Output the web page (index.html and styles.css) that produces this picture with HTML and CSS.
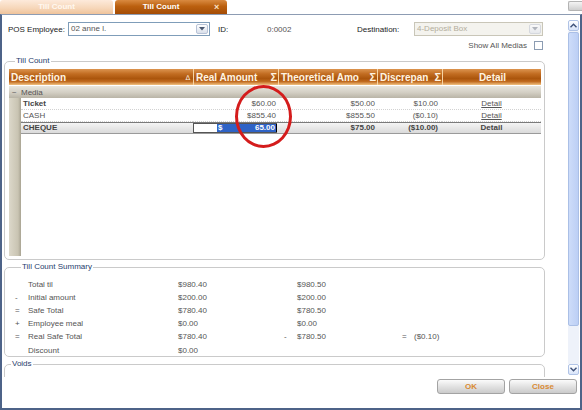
FILE: index.html
```html
<!DOCTYPE html>
<html>
<head>
<meta charset="utf-8">
<title>Till Count</title>
<link rel="stylesheet" href="styles.css">
</head>
<body>
<div class="app">
  <div class="tabs">
    <div class="tab inactive">Till Count</div>
    <div class="tab active"><span class="tab-label">Till Count</span><span class="tab-x">×</span></div>
    <div class="tab-spacer"></div>
    <div class="mini-btn"></div>
  </div>
  <div class="frame">
    <div class="viewport">
      <div class="content">
        <div class="top-row">
          <span class="lbl lbl-emp">POS Employee:</span>
          <div class="select sel-emp">
            <span class="select-text">02 anne l.</span>
            <span class="select-btn"><svg width="6" height="4" viewBox="0 0 6 4"><path d="M0 0H6L3 3.5Z" fill="#4a5870"/></svg></span>
          </div>
          <span class="lbl lbl-id">ID:</span>
          <span class="val-id">0:0002</span>
          <span class="lbl lbl-dest">Destination:</span>
          <div class="select sel-dest disabled">
            <span class="select-text">4-Deposit Box</span>
            <span class="select-btn"><svg width="6" height="4" viewBox="0 0 6 4"><path d="M0 0H6L3 3.5Z" fill="#b0b4bc"/></svg></span>
          </div>
        </div>
        <div class="medias-row">
          <span>Show All Medias</span>
          <span class="checkbox"></span>
        </div>

        <fieldset class="group count">
          <legend>Till Count</legend>
          <div class="grid">
            <div class="grid-head">
              <div class="hcell"><span>Description</span><span class="sort">&#8710;</span></div>
              <div class="hcell"><span>Real Amount</span><span class="sigma">Σ</span></div>
              <div class="hcell"><span>Theoretical Amo</span><span class="sigma">Σ</span></div>
              <div class="hcell"><span>Discrepan</span><span class="sigma">Σ</span></div>
              <div class="hcell center"><span>Detail</span></div>
            </div>
            <div class="group-row"><span class="minus">−</span><span>Media</span></div>
            <div class="grid-body">
              <div class="gutter"></div>
              <div class="rows">
                <div class="row">
                  <div class="cell desc strong">Ticket</div>
                  <div class="cell num">$60.00</div>
                  <div class="cell num">$50.00</div>
                  <div class="cell num disc">$10.00</div>
                  <div class="cell center"><span class="link">Detail</span></div>
                </div>
                <div class="row">
                  <div class="cell desc">CASH</div>
                  <div class="cell num">$855.40</div>
                  <div class="cell num">$855.50</div>
                  <div class="cell num disc">($0.10)</div>
                  <div class="cell center"><span class="link">Detail</span></div>
                </div>
                <div class="row selected">
                  <div class="cell desc">CHEQUE</div>
                  <div class="cell editor-cell">
                    <div class="editor"><span class="editor-sel"><span>$</span><span>65.00</span></span><span class="caret"></span></div>
                  </div>
                  <div class="cell num">$75.00</div>
                  <div class="cell num disc">($10.00)</div>
                  <div class="cell center">Detail</div>
                </div>
              </div>
            </div>
          </div>
        </fieldset>

        <fieldset class="group summary">
          <legend>Till Count Summary</legend>
          <div class="sum-grid">
            <span></span><span>Total til</span><span>$980.40</span><span></span><span>$980.50</span><span></span><span></span>
            <span>-</span><span>Initial amount</span><span>$200.00</span><span></span><span>$200.00</span><span></span><span></span>
            <span>=</span><span>Safe Total</span><span>$780.40</span><span></span><span>$780.50</span><span></span><span></span>
            <span>+</span><span>Employee meal</span><span>$0.00</span><span></span><span>$0.00</span><span></span><span></span>
            <span>=</span><span>Real Safe Total</span><span>$780.40</span><span>-</span><span>$780.50</span><span>=</span><span>($0.10)</span>
            <span class="last"></span><span class="last">Discount</span><span class="last">$0.00</span><span class="last"></span><span class="last"></span><span class="last"></span><span class="last"></span>
          </div>
        </fieldset>

        <fieldset class="group voids">
          <legend>Voids</legend>
        </fieldset>
      </div>
      <div class="vscroll">
        <div class="vs-btn"><svg width="7" height="5" viewBox="0 0 7 5"><path d="M0.5 4.2L3.5 1.2L6.5 4.2" fill="none" stroke="#3d5078" stroke-width="1.4"/></svg></div>
        <div class="vs-track"><div class="vs-thumb"></div></div>
        <div class="vs-btn"><svg width="7" height="5" viewBox="0 0 7 5"><path d="M0.5 0.8L3.5 3.8L6.5 0.8" fill="none" stroke="#3d5078" stroke-width="1.4"/></svg></div>
      </div>
    </div>
    <div class="buttons">
      <button class="btn">OK</button>
      <button class="btn">Close</button>
    </div>
  </div>
  <div class="annot"></div>
</div>
</body>
</html>
```

FILE: styles.css
```css
html, body {
  margin: 0;
  padding: 0;
}
body {
  width: 582px;
  height: 410px;
  overflow: hidden;
  background: #fff;
  font-family: "Liberation Sans", Arial, sans-serif;
  font-size: 8px;
  color: #555;
}
.app {
  position: relative;
  width: 582px;
  height: 410px;
}

/* tabs */
.tabs {
  height: 14px;
  display: flex;
  align-items: flex-end;
}
.tab {
  height: 14px;
  line-height: 14px;
  font-weight: bold;
  font-size: 8px;
  box-sizing: border-box;
  border-radius: 3px 3px 0 0;
}
.tab.inactive {
  width: 113px;
  text-align: center;
  color: #fff8f0;
  background: linear-gradient(#fdeadb, #f6d6b8 60%, #efc39b);
}
.tab.active {
  width: 112px;
  margin-left: 2px;
  display: flex;
  color: #fff;
  background: linear-gradient(#d98a40, #bb600f 45%, #a44c05);
}
.tab-label {
  width: 92px;
  text-align: center;
}
.tab-x {
  padding-left: 7px;
  font-size: 9px;
  color: #fbe2c8;
}
.tab-spacer {
  flex: 1;
}
.mini-btn {
  width: 13px;
  height: 8px;
  margin-bottom: 3px;
  border: 1px solid #b3b3b3;
  border-right: none;
  border-radius: 2px 0 0 2px;
  background: linear-gradient(#f4f4f4, #cfcfcf);
}

/* frame */
.frame {
  height: 396px;
  box-sizing: border-box;
  border: 2px solid #4d6388;
  border-top: 1px solid #8d9cb3;
  display: flex;
  flex-direction: column;
}
.viewport {
  height: 362px;
  display: flex;
  overflow: hidden;
}
.content {
  flex: 1;
  overflow: hidden;
  padding: 7px 0 0 2px;
}

/* top form */
.top-row {
  display: flex;
  align-items: center;
  height: 14px;
  padding-left: 4px;
}
.lbl {
  color: #222;
}
.lbl-emp { width: 60px; }
.sel-emp { width: 142px; }
.lbl-id { width: 49px; margin-left: 8px; }
.val-id { width: 90px; color: #555; }
.lbl-dest { width: 57px; }
.sel-dest { width: 129px; }

.select {
  display: flex;
  height: 14px;
  box-sizing: border-box;
  border: 1px solid #7f9db9;
  background: #fff;
}
.select-text {
  flex: 1;
  padding-left: 2px;
  line-height: 12px;
  color: #555;
}
.select-btn {
  width: 12px;
  margin: 1px;
  box-sizing: border-box;
  border: 1px solid #b7c2d6;
  border-radius: 2px;
  background: linear-gradient(#ffffff, #d9dfea);
  display: flex;
  align-items: center;
  justify-content: center;
}
.select.disabled {
  border-color: #c9c6b8;
  background: #f4f3ee;
}
.select.disabled .select-text {
  color: #b3ad9c;
}
.select.disabled .select-btn {
  border-color: #d5d8de;
  background: linear-gradient(#f9f9f9, #e6e8ec);
}

.medias-row {
  display: flex;
  align-items: center;
  justify-content: flex-end;
  gap: 7px;
  height: 9px;
  margin-top: 5px;
  padding-right: 25px;
  color: #555;
}
.checkbox {
  width: 9px;
  height: 9px;
  box-sizing: border-box;
  border: 1px solid #8c9cb2;
  background: #fff;
}

/* group boxes */
fieldset.group {
  margin: 0;
  padding: 0;
  min-width: 0;
  width: 541px;
  box-sizing: border-box;
  border: 1px solid #cacaca;
  border-radius: 5px;
}
fieldset.group legend {
  margin-left: 6px;
  padding: 0 1px;
  font-size: 8px;
  line-height: 10px;
  height: 10px;
  color: #1f3d6d;
}
.count {
  margin-top: 6px !important;
  padding: 3px 3px 3px 4px !important;
}

/* grid */
.grid-head {
  display: grid;
  grid-template-columns: 184px 85px 99px 65px 99px;
  height: 16px;
}
.hcell {
  display: flex;
  align-items: center;
  justify-content: space-between;
  padding: 0 1px 0 2px;
  font-size: 10px;
  font-weight: bold;
  color: #fff4e2;
  background: linear-gradient(#dc944f, #c26d22 30%, #ab550c 60%, #c06a1e 78%, #f2c383);
  border-left: 1px solid #f6d4a4;
  overflow: hidden;
  white-space: nowrap;
}
.hcell:first-child {
  border-left: none;
}
.hcell.center {
  justify-content: center;
}
.sort {
  font-size: 7px;
  font-weight: normal;
  padding-right: 2px;
}
.sigma {
  font-size: 11px;
}
.group-row {
  margin-top: 1px;
  height: 12px;
  display: flex;
  align-items: center;
  gap: 3px;
  padding-left: 3px;
  color: #555;
  background: linear-gradient(#e8e6de, #d2cec3 55%, #b9b4a6);
}
.minus {
  width: 6px;
  color: #666;
}
.grid-body {
  display: flex;
  height: 158px;
}
.gutter {
  width: 12px;
  background: linear-gradient(to right, #dcd8ca, #c9c4b2 75%, #a9a493);
}
.rows {
  flex: 1;
}
.row {
  display: grid;
  grid-template-columns: 172px 85px 99px 65px 99px;
  height: 12px;
}
.cell {
  box-sizing: border-box;
  line-height: 11px;
  border-bottom: 1px dotted #d2d2d2;
  white-space: nowrap;
  overflow: hidden;
}
.cell.desc {
  padding-left: 2px;
  color: #555;
}
.cell.strong {
  font-weight: bold;
  color: #444;
}
.cell.num {
  text-align: right;
  padding-right: 2px;
}
.cell.num.disc {
  padding-right: 4px;
}
.cell.center {
  text-align: center;
}
.link {
  text-decoration: underline;
  color: #555;
}
.row.selected {
  font-weight: bold;
  color: #444;
  background: linear-gradient(#f4f4f4, #dadada);
  border-top: 1px solid #7a7a7a;
  border-bottom: 1px solid #9a9a9a;
  height: 12px;
  box-sizing: border-box;
}
.row.selected .cell {
  border-bottom: none;
  line-height: 10px;
  color: #444;
}
.editor-cell {
  padding: 0;
}
.editor {
  height: 10px;
  box-sizing: border-box;
  margin-right: 1px;
  display: flex;
  justify-content: flex-end;
  background: #fff;
  border: 1px solid #555;
  border-right: none;
}
.editor-sel {
  width: 57px;
  display: flex;
  justify-content: space-between;
  padding: 0 1px;
  line-height: 8px;
  color: #fff;
  background: #2f63c6;
}
.caret {
  width: 1px;
  background: #000;
}

/* summary */
.summary {
  margin-top: 2px !important;
  padding: 6px 0 0 10px !important;
}
.sum-grid {
  display: grid;
  grid-template-columns: 13px 150px 106px 13px 105px 12px auto;
  grid-auto-rows: 13px;
  line-height: 13px;
  color: #555;
}
.sum-grid .last {
  margin-top: 1px;
}

/* voids */
.voids {
  margin-top: 2px !important;
  height: 40px;
}

/* scrollbar */
.vscroll {
  width: 11px;
  margin: 5px 1px 2px 0;
  display: flex;
  flex-direction: column;
}
.vs-btn {
  height: 11px;
  box-sizing: border-box;
  border: 1px solid #b0c3e6;
  border-radius: 2px;
  background: linear-gradient(#ffffff, #d8e4fa);
  display: flex;
  align-items: center;
  justify-content: center;
}
.vs-track {
  flex: 1;
  background: #eef2fa;
  padding-top: 1px;
}
.vs-thumb {
  height: 294px;
  box-sizing: border-box;
  border: 1px solid #aabfe6;
  border-radius: 2px;
  background: linear-gradient(to right, #cddcf9, #bccff5);
}

/* buttons */
.buttons {
  display: flex;
  justify-content: flex-end;
  gap: 4px;
  padding: 2px 3px 0 0;
}
.btn {
  width: 68px;
  height: 15px;
  margin: 0;
  padding: 0;
  box-sizing: border-box;
  border: 1px solid #a3a3a3;
  border-radius: 3px;
  background: linear-gradient(#fbfbfb, #e2e2e2 50%, #cbcbcb);
  font-family: "Liberation Sans", Arial, sans-serif;
  font-size: 8px;
  font-weight: bold;
  color: #d98a32;
}

/* annotation circle */
.annot {
  position: absolute;
  left: 235px;
  top: 85px;
  width: 57px;
  height: 63px;
  box-sizing: border-box;
  border: 3px solid #d41c1c;
  border-radius: 50%;
}
```
